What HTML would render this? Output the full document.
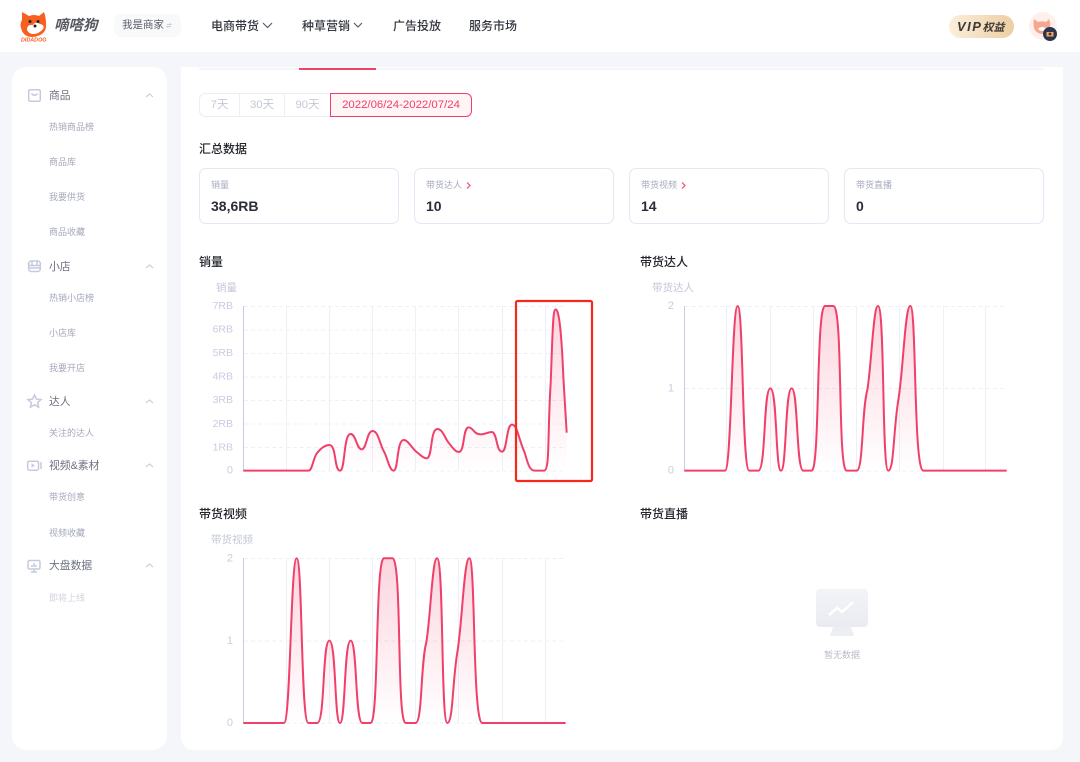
<!DOCTYPE html>
<html lang="zh"><head><meta charset="utf-8"><title>嘀嗒狗</title>
<style>
html,body{margin:0;padding:0;width:1080px;height:762px;overflow:hidden;background:#f5f6f9;font-family:"Liberation Sans","Noto Sans CJK SC",sans-serif}
.a{position:absolute;box-sizing:border-box}
.t{position:absolute;white-space:nowrap;line-height:1}
.nav{font-size:12px;font-weight:500;color:#33363f}
.m{font-size:10.8px;color:#6d7282;left:49px}
.s{font-size:9px;color:#a5a9bb;left:49px}
.h{font-size:12px;font-weight:500;color:#23252c}
.card{position:absolute;top:168px;width:200px;height:56px;border:1px solid #e4e7f4;border-radius:7px;background:#fff;box-sizing:border-box}
.card .l{position:absolute;left:11px;top:12px;font-size:9px;line-height:1;color:#a6aabc;white-space:nowrap}
.card .v{position:absolute;left:11px;top:30px;font-size:14px;line-height:1;font-weight:700;color:#2a2d38;white-space:nowrap}
.tab{position:absolute;top:93px;height:24px;border:1px solid #eceef3;font-size:11.400px;line-height:23px;color:#c4c8d5;text-align:center;box-sizing:border-box;background:#fff}
svg{position:absolute;left:0;top:0}
</style></head><body>
<div class="a" style="left:0;top:0;width:1080px;height:52px;background:#fff"></div>
<div class="a" style="left:12px;top:67px;width:155px;height:683px;background:#fff;border-radius:14px"></div>
<div class="a" style="left:181px;top:67px;width:882px;height:683px;background:#fff;border-radius:0 0 12px 12px"></div>
<div class="a" style="left:199px;top:68px;width:845px;height:2px;background:#f5f6f9"></div>
<div class="a" style="left:299px;top:68px;width:77px;height:2px;background:#f0406a"></div>

<!-- header text -->
<div class="t" style="left:54px;top:18.500px;font-size:14.500px;font-weight:700;font-style:italic;color:#555860">嘀嗒狗</div>
<div class="a" style="left:114px;top:14px;width:67px;height:23px;background:#f8f9fb;border-radius:7px"></div>
<div class="t" style="left:122px;top:20px;font-size:10.500px;color:#5a5e6a">我是商家</div>
<div class="t nav" style="left:211px;top:20px">电商带货</div>
<div class="t nav" style="left:302px;top:20px">种草营销</div>
<div class="t nav" style="left:393px;top:20px">广告投放</div>
<div class="t nav" style="left:469px;top:20px">服务市场</div>
<div class="a" style="left:949px;top:15px;width:65px;height:23px;border-radius:12px;background:linear-gradient(90deg,#fbeeda,#eccfa4)"></div>
<div class="t" style="left:957px;top:20px;font-size:11px;font-weight:700;font-style:italic;color:#3d3934"><span style="font-size:13px;letter-spacing:1.500px">VIP</span>权益</div>

<!-- sidebar text -->
<div class="t m" style="top:90.500px">商品</div>
<div class="t s" style="top:123px">热销商品榜</div>
<div class="t s" style="top:158px">商品库</div>
<div class="t s" style="top:193px">我要供货</div>
<div class="t s" style="top:228px">商品收藏</div>
<div class="t m" style="top:261.500px">小店</div>
<div class="t s" style="top:294px">热销小店榜</div>
<div class="t s" style="top:329px">小店库</div>
<div class="t s" style="top:364px">我要开店</div>
<div class="t m" style="top:396.500px">达人</div>
<div class="t s" style="top:429px">关注的达人</div>
<div class="t m" style="top:460.500px">视频&amp;素材</div>
<div class="t s" style="top:493px">带货创意</div>
<div class="t s" style="top:529px">视频收藏</div>
<div class="t m" style="top:560.500px">大盘数据</div>
<div class="t s" style="top:594px;color:#d0d3dd">即将上线</div>

<!-- tabs -->
<div class="tab" style="left:199px;width:40px;border-radius:6px 0 0 6px;border-right:0">7天</div>
<div class="tab" style="left:239px;width:45px;border-right:0">30天</div>
<div class="tab" style="left:284px;width:46px;border-right:0">90天</div>
<div class="tab" style="left:330px;width:142px;border:1px solid #f0406a;border-radius:0 6px 6px 0;background:#fff4f6;color:#f0406a">2022/06/24-2022/07/24</div>

<div class="t h" style="left:199px;top:143px">汇总数据</div>
<div class="card" style="left:199px"><div class="l">销量</div><div class="v">38,6RB</div></div>
<div class="card" style="left:414px"><div class="l">带货达人</div><div class="v">10</div></div>
<div class="card" style="left:629px"><div class="l">带货视频</div><div class="v">14</div></div>
<div class="card" style="left:844px"><div class="l">带货直播</div><div class="v">0</div></div>

<div class="t h" style="left:199px;top:256px">销量</div>
<div class="t h" style="left:640px;top:256px">带货达人</div>
<div class="t h" style="left:199px;top:508px">带货视频</div>
<div class="t h" style="left:640px;top:508px">带货直播</div>
<div class="t" style="left:824px;top:651px;font-size:9px;color:#b6bac7">暂无数据</div>

<svg width="1080" height="762" viewBox="0 0 1080 762" font-family="'Liberation Sans','Noto Sans CJK SC',sans-serif">
<defs>
<linearGradient id="g" x1="0" y1="0" x2="0" y2="1"><stop offset="0" stop-color="#f0406a" stop-opacity=".22"/><stop offset="1" stop-color="#f0406a" stop-opacity="0"/></linearGradient>
<linearGradient id="mon" x1="0" y1="0" x2="0" y2="1"><stop offset="0" stop-color="#f3f4f8"/><stop offset="1" stop-color="#e9ebf1"/></linearGradient>
</defs>

<!-- logo -->
<g>
<path d="M22 12 L29 16 Q34 14 39 16 L44 12 Q46 18 46 23 Q47 30 42 34 Q37 37 32 37 Q25 37 22 31 Q19 24 22 20 Z" fill="#f9601f"/>
<path d="M27 30 Q27 24 33 25 Q35 21 40 24 Q45 25 43 29 Q39 34 33 34 Q29 34 27 30Z" fill="#fff"/>
<circle cx="30" cy="21.500" r="1.500" fill="#222"/><circle cx="38" cy="21.500" r="1.500" fill="#222"/><circle cx="35" cy="26" r="1.500" fill="#222"/>
<text x="21" y="41.500" font-size="5.400" font-weight="700" font-style="italic" fill="#f9601f">DIDADOG</text>
</g>
<!-- header chevrons and switch -->
<path d="M167 24.500h4l-1.200-1.200M171 26.500h-4l1.200 1.200" fill="none" stroke="#c9ccd6" stroke-width=".9"/>
<path d="M263 23l4.500 4.500 4.500-4.500" fill="none" stroke="#5a5e6a" stroke-width="1.200"/>
<path d="M354 23l4 4 4-4" fill="none" stroke="#5a5e6a" stroke-width="1.200"/>
<!-- avatar -->
<circle cx="1043" cy="26" r="14" fill="#fff0ec"/>
<path d="M1034 19l4 3q4-1.500 8 0l3-3q2 5 1 8q-1 6-7 7q-7 0-9-6q-1-5 0-9z" fill="#f4a890"/>
<path d="M1038 29q4-4 9 0q-4 4-9 0z" fill="#fff"/>
<circle cx="1050" cy="34" r="7" fill="#2c3550"/>
<path d="M1046.500 32h7v4.500h-7z" fill="#f3a45a"/>
<circle cx="1050" cy="34" r="1.400" fill="#2c3550"/>

<!-- sidebar icons -->
<g fill="none" stroke="#c6cadd" stroke-width="1.500">
<rect x="28.700" y="89.700" width="11.600" height="11.600" rx="1.500"/><path d="M31.500 93.500q3 3.500 6 0"/>
<rect x="28.700" y="261" width="11.600" height="10.500" rx="2.500"/><path d="M28.700 265.500h11.600M28.700 268h11.600M32 261v4.500M37 261v4.500"/>
<path d="M34.500 395l1.900 4.100 4.600.5-3.400 3 1 4.500-4.100-2.400-4.100 2.400 1-4.500-3.400-3 4.600-.5z"/>
<rect x="27.700" y="461.200" width="10.800" height="9" rx="1.500"/><path d="M41 462v7"/><path d="M31.500 463.300l3.500 2.200-3.500 2.200z" fill="#c6cadd" stroke="none"/>
<rect x="28" y="560.500" width="12" height="8.500" rx="1.500"/><path d="M31 572h6M34 569.500v2.500M32 567v-2M34 567v-4M36 567v-2"/>
<path d="M146 97l3.500-3 3.500 3M146 268l3.500-3 3.500 3M146 403l3.500-3 3.500 3M146 467l3.500-3 3.500 3M146 567l3.500-3 3.500 3" stroke-width="1.100"/>
</g>
<!-- card chevrons -->
<path d="M467 182.500l3 3-3 3M682 182.500l3 3-3 3" fill="none" stroke="#f0628a" stroke-width="1.400"/>

<!-- Chart 1 -->
<g font-size="10.500" fill="#c8cde0" text-anchor="end">
<text x="237" y="291" fill="#c4c8d8">销量</text>
<text x="233" y="309">7RB</text><text x="233" y="332.500">6RB</text><text x="233" y="356">5RB</text><text x="233" y="379.500">4RB</text><text x="233" y="403">3RB</text><text x="233" y="427">2RB</text><text x="233" y="450.500">1RB</text><text x="233" y="473.500" font-size="11">0</text>
</g>
<g stroke="#eef0f8" stroke-width="1" fill="none">
<path d="M286.500 306V471M329.500 306V471M372.500 306V471M415.500 306V471M458.500 306V471M502.500 306V471M545.500 306V471"/>
<path stroke-dasharray="4 3" d="M244 306.500H565M244 330H565M244 353.500H565M244 377H565M244 400.500H565M244 424H565M244 447.500H565M244 471H565"/>
</g>
<path d="M243.500 306V471" stroke="#c9cddd" fill="none"/>
<g transform="translate(190,250) scale(.33333)">
<path fill="url(#g)" d="M160 662 L355 662 C368 662 368 625 382 608 C392 596 405 585 418 585 C440 585 432 662 450 662 C466 662 460 552 482 552 C498 552 500 598 515 598 C530 598 530 543 548 543 C565 543 570 585 582 605 C592 622 598 662 611 662 C625 662 620 570 641 570 C655 570 665 595 680 606 C692 615 700 625 710 625 C728 625 720 537 742 537 C758 537 765 565 775 577 C785 589 795 606 806 606 C825 606 818 532 836 532 C850 532 850 553 872 553 C885 553 895 546 905 546 C922 546 918 605 936 605 C952 605 948 524 966 524 C982 524 985 565 1003 605 C1012 630 1015 662 1035 662 L1062 662 C1080 662 1072 560 1082 400 C1088 250 1088 178 1097 178 C1108 178 1115 260 1120 380 L1130 548 V662 Z"/>
<path fill="none" stroke="#f0406a" stroke-width="6" d="M160 662 L355 662 C368 662 368 625 382 608 C392 596 405 585 418 585 C440 585 432 662 450 662 C466 662 460 552 482 552 C498 552 500 598 515 598 C530 598 530 543 548 543 C565 543 570 585 582 605 C592 622 598 662 611 662 C625 662 620 570 641 570 C655 570 665 595 680 606 C692 615 700 625 710 625 C728 625 720 537 742 537 C758 537 765 565 775 577 C785 589 795 606 806 606 C825 606 818 532 836 532 C850 532 850 553 872 553 C885 553 895 546 905 546 C922 546 918 605 936 605 C952 605 948 524 966 524 C982 524 985 565 1003 605 C1012 630 1015 662 1035 662 L1062 662 C1080 662 1072 560 1082 400 C1088 250 1088 178 1097 178 C1108 178 1115 260 1120 380 L1130 548"/>
</g>
<rect x="516" y="301" width="76" height="180" rx="1.500" fill="none" stroke="#f5281c" stroke-width="2.200"/>

<!-- Chart 2 -->
<g font-size="11" fill="#c8cde0" text-anchor="end">
<text x="694" y="291" font-size="10.500" fill="#c4c8d8">带货达人</text>
<text x="674" y="309">2</text><text x="674" y="391.500">1</text><text x="674" y="473.500">0</text>
</g>
<g stroke="#eef0f8" stroke-width="1" fill="none">
<path d="M726.500 306V471M770.500 306V471M813.500 306V471M856.500 306V471M899.500 306V471M943.500 306V471M985.500 306V471"/>
<path stroke-dasharray="4 3" d="M685 306.500H1006M685 388.500H1006M685 471H1006"/>
</g>
<path d="M684.500 306V471" stroke="#c9cddd" fill="none"/>
<g transform="translate(630,250) scale(.33333)">
<path fill="url(#g)" d="M163 662 L285 662 C305 662 305 168 323 168 C341 168 335 662 358 662 L385 662 C408 662 400 415 421 415 C442 415 436 662 453 662 C470 662 465 415 485 415 C505 415 498 662 520 662 L545 662 C570 662 558 168 585 168 L610 168 C640 168 622 662 650 662 L680 662 C700 662 695 480 712 420 C725 340 730 168 744 168 C765 168 755 662 775 662 C792 662 790 540 805 450 C820 360 825 168 841 168 C860 168 850 662 880 662 Z"/>
<path fill="none" stroke="#f0406a" stroke-width="6" d="M163 662 L285 662 C305 662 305 168 323 168 C341 168 335 662 358 662 L385 662 C408 662 400 415 421 415 C442 415 436 662 453 662 C470 662 465 415 485 415 C505 415 498 662 520 662 L545 662 C570 662 558 168 585 168 L610 168 C640 168 622 662 650 662 L680 662 C700 662 695 480 712 420 C725 340 730 168 744 168 C765 168 755 662 775 662 C792 662 790 540 805 450 C820 360 825 168 841 168 C860 168 850 662 880 662 L1130 662"/>
</g>

<!-- Chart 3 -->
<g font-size="11" fill="#c8cde0" text-anchor="end">
<text x="253" y="543" font-size="10.500" fill="#c4c8d8">带货视频</text>
<text x="233" y="561.500">2</text><text x="233" y="644">1</text><text x="233" y="726">0</text>
</g>
<g stroke="#eef0f8" stroke-width="1" fill="none">
<path d="M286.500 558V723M329.500 558V723M372.500 558V723M415.500 558V723M458.500 558V723M502.500 558V723M545.500 558V723"/>
<path stroke-dasharray="4 3" d="M244 558.500H565M244 641H565M244 723H565"/>
</g>
<path d="M243.500 558V723" stroke="#c9cddd" fill="none"/>
<g transform="translate(189,502.300) scale(.33333)">
<path fill="url(#g)" d="M163 662 L285 662 C305 662 305 168 323 168 C341 168 335 662 358 662 L385 662 C408 662 400 415 421 415 C442 415 436 662 453 662 C470 662 465 415 485 415 C505 415 498 662 520 662 L545 662 C570 662 558 168 585 168 L610 168 C640 168 622 662 650 662 L680 662 C700 662 695 480 712 420 C725 340 730 168 744 168 C765 168 755 662 775 662 C792 662 790 540 805 450 C820 360 825 168 841 168 C860 168 850 662 880 662 Z"/>
<path fill="none" stroke="#f0406a" stroke-width="6" d="M163 662 L285 662 C305 662 305 168 323 168 C341 168 335 662 358 662 L385 662 C408 662 400 415 421 415 C442 415 436 662 453 662 C470 662 465 415 485 415 C505 415 498 662 520 662 L545 662 C570 662 558 168 585 168 L610 168 C640 168 622 662 650 662 L680 662 C700 662 695 480 712 420 C725 340 730 168 744 168 C765 168 755 662 775 662 C792 662 790 540 805 450 C820 360 825 168 841 168 C860 168 850 662 880 662 L1130 662"/>
</g>

<!-- empty state -->
<rect x="816" y="589" width="52" height="38" rx="4" fill="url(#mon)"/>
<path d="M833 627h18l3 9h-24z" fill="#eceef3"/>
<path d="M829 615l8-7 5 4 11-10" fill="none" stroke="#fff" stroke-width="2.500"/>
</svg>
</body></html>
